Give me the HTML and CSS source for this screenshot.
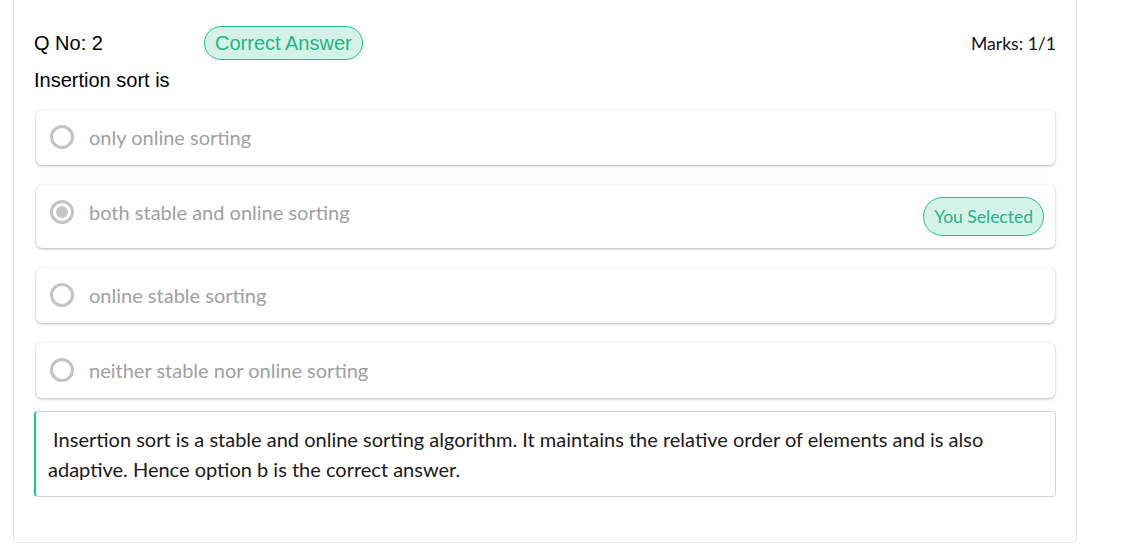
FILE: index.html
```html
<!DOCTYPE html>
<html>
<head>
<meta charset="utf-8">
<link rel="stylesheet" href="styles.css">
</head>
<body>
<div class="card">
  <div class="header">
    <span class="qno">Q No: 2</span>
    <span class="badge-correct">Correct Answer</span>
    <span class="marks">Marks: 1/1</span>
  </div>
  <div class="question">Insertion sort is</div>
  <div class="options">
    <div class="option">
      <div class="opt-main">
        <span class="radio"></span>
        <span class="opt-text">only online sorting</span>
      </div>
    </div>
    <div class="option">
      <div class="opt-main">
        <span class="radio checked"></span>
        <span class="opt-text">both stable and online sorting</span>
      </div>
      <span class="badge-selected">You Selected</span>
    </div>
    <div class="option">
      <div class="opt-main">
        <span class="radio"></span>
        <span class="opt-text">online stable sorting</span>
      </div>
    </div>
    <div class="option">
      <div class="opt-main">
        <span class="radio"></span>
        <span class="opt-text">neither stable nor online sorting</span>
      </div>
    </div>
  </div>
  <div class="explanation">&nbsp;Insertion sort is a stable and online sorting algorithm. It maintains the relative order of elements and is also adaptive. Hence option b is the correct answer.</div>
</div>
</body>
</html>
```
FILE: styles.css
```css
html, body {
  margin: 0;
  padding: 0;
  background: #ffffff;
}
.card {
  margin-left: 13px;
  width: 1064px;
  box-sizing: border-box;
  border: 1px solid #e6e6e6;
  border-top: none;
  border-radius: 0 0 5px 5px;
  padding: 26px 20px 45px 20px;
}
.header {
  display: flex;
  align-items: center;
  height: 34px;
}
.qno {
  width: 170px;
  font-family: "Liberation Sans", Arial, sans-serif;
  font-size: 20px;
  color: #000;
}
.badge-correct {
  box-sizing: border-box;
  height: 34px;
  display: flex;
  align-items: center;
  padding: 0 10px;
  border: 1px solid #22c08c;
  border-radius: 17px;
  background: #d5f2e8;
  color: #1fb584;
  font-family: "Liberation Sans", Arial, sans-serif;
  font-size: 20px;
}
.marks {
  margin-left: auto;
  font-family: Lato, sans-serif;
  font-size: 17.6px;
  color: #111122;
}
.question {
  margin-top: 8px;
  line-height: 24px;
  font-family: "Liberation Sans", Arial, sans-serif;
  font-size: 20px;
  color: #000;
}
.options {
  margin-top: 18px;
  display: flex;
  flex-direction: column;
  gap: 20px;
  padding: 0 1px 0 2px;
}
.option {
  box-sizing: border-box;
  min-height: 55px;
  display: flex;
  align-items: flex-start;
  padding: 0 11px 0 14px;
  border-radius: 6px;
  background: #fff;
  box-shadow: 0 1px 3px rgba(0, 0, 0, 0.28), 0 0 1px rgba(0, 0, 0, 0.08);
}
.opt-main {
  display: flex;
  align-items: center;
  margin-top: 15px;
  height: 24px;
}
.radio {
  box-sizing: border-box;
  width: 24px;
  height: 24px;
  border-radius: 50%;
  border: 3px solid #c4c4c4;
  flex: none;
  display: flex;
  align-items: center;
  justify-content: center;
}
.radio.checked::after {
  content: "";
  width: 12px;
  height: 12px;
  border-radius: 50%;
  background: #c4c4c4;
}
.opt-text {
  margin-left: 15px;
  font-family: Lato, sans-serif;
  font-size: 20px;
  line-height: 24px;
  color: #a0a0a4;
}
.badge-selected {
  margin: 12px 0 12px auto;
  align-self: center;
  box-sizing: border-box;
  height: 39px;
  display: flex;
  align-items: center;
  padding: 0 10px;
  border: 1px solid #22c08c;
  border-radius: 20px;
  background: #d5f2e8;
  color: #1fb584;
  font-family: Lato, sans-serif;
  font-size: 17.5px;
}
.explanation {
  margin-top: 13px;
  border: 1px solid #d3d3dc;
  border-left: 2px solid #1ec28e;
  border-radius: 4px;
  padding: 12px 20px 12px 12px;
  font-family: Lato, sans-serif;
  font-size: 20px;
  line-height: 30px;
  color: #1a1a1a;
}
```
